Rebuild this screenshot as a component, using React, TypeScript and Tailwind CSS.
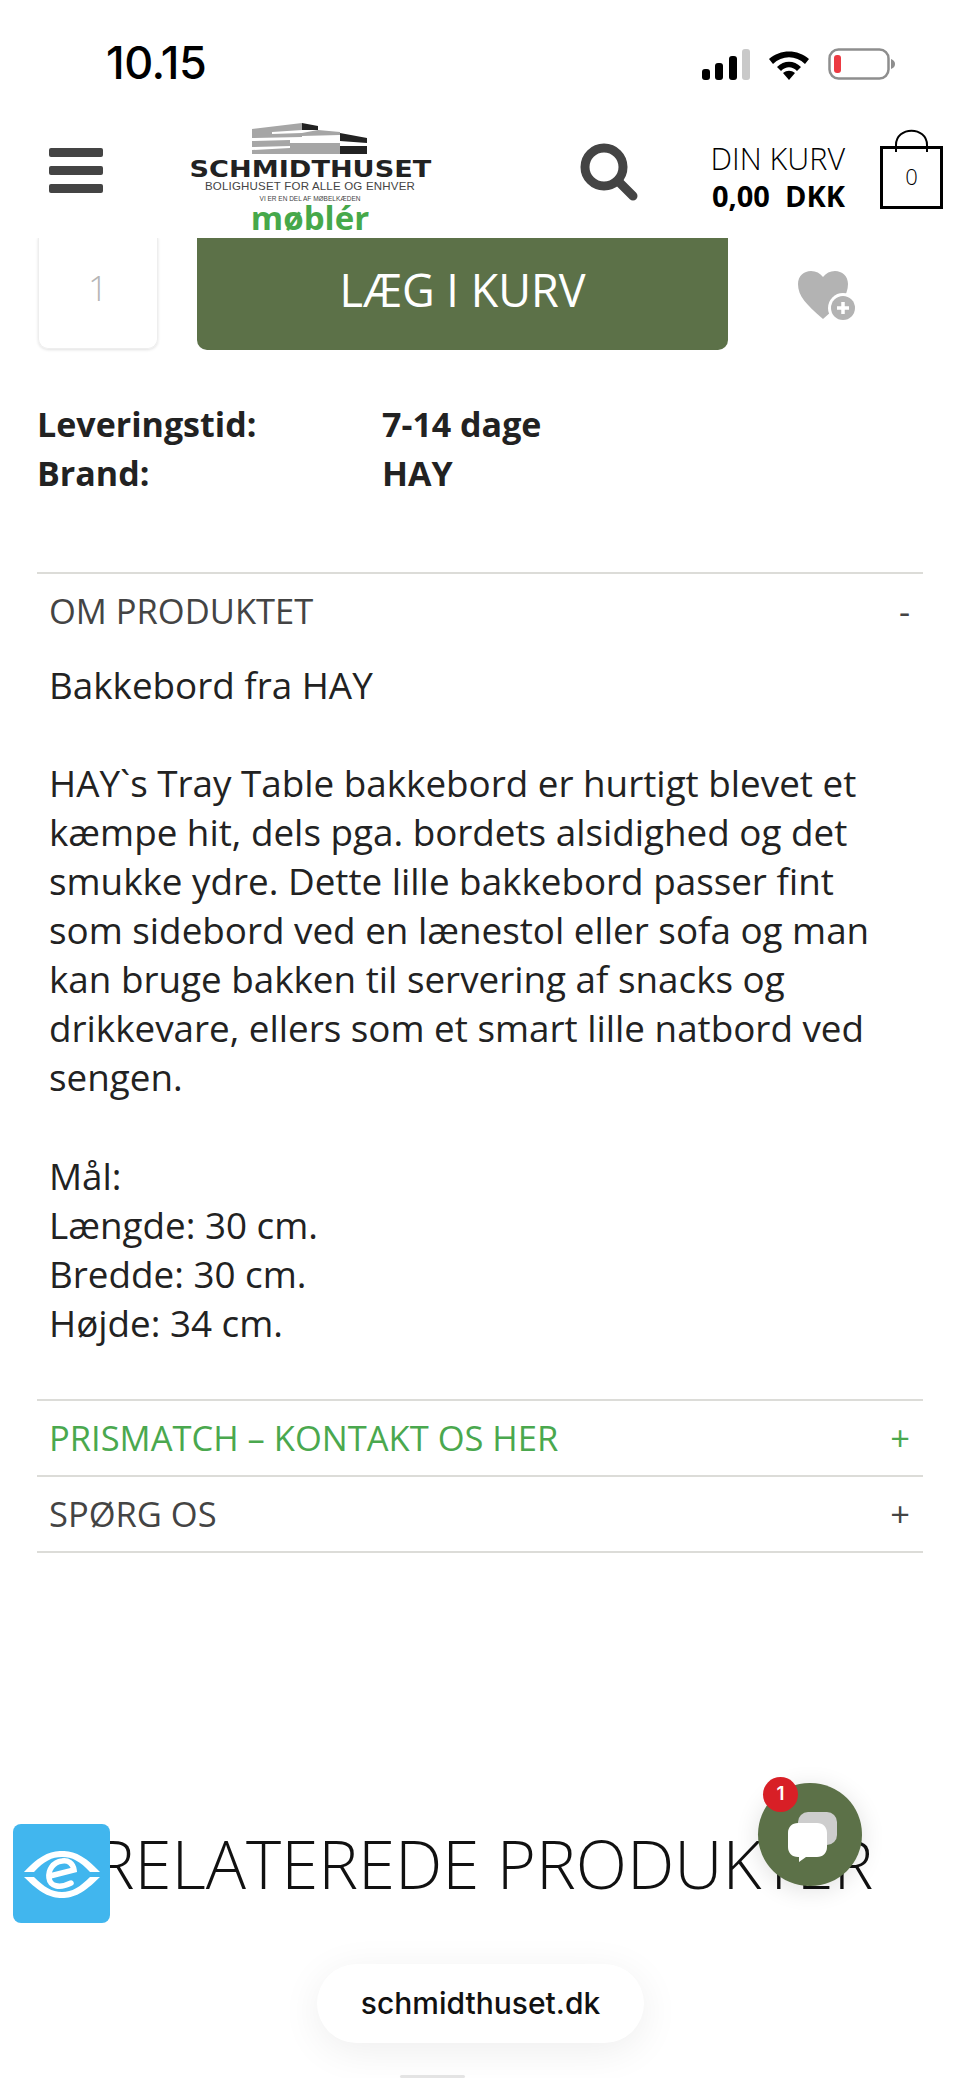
import React from 'react';

const sans = "font-['Open_Sans',sans-serif]";

const StatusBar = () => (
  <div className="h-[110px] flex items-start justify-between">
    <div className="ml-[106px] mt-[38px] font-['Inter',sans-serif] font-medium text-[45px] leading-[50px] tracking-[-0.5px] text-black">
      10.15
    </div>
    <div className="flex items-center gap-[18px] mr-[65px] mt-[48px]">
      <svg width="48" height="31" viewBox="0 0 48 31">
        <rect x="0" y="20" width="8" height="11" rx="3" fill="#000" />
        <rect x="13" y="14" width="8" height="17" rx="3" fill="#000" />
        <rect x="27" y="7" width="8" height="24" rx="3" fill="#000" />
        <rect x="40" y="0" width="8" height="31" rx="3" fill="#c9c9c9" />
      </svg>
      <svg width="42" height="31" viewBox="0 0 42 31">
        <path d="M1 10 C12 0 30 0 41 10 L37 15 C28 6 14 6 5 15 Z" fill="#000" />
        <path d="M9 18 C16 11 26 11 33 18 L29 22 C24 17 18 17 13 22 Z" fill="#000" />
        <path d="M15 24 C19 21 23 21 27 24 L21 31 Z" fill="#000" />
      </svg>
      <svg width="67" height="32" viewBox="0 0 67 32">
        <rect x="1.5" y="1.5" width="59" height="29" rx="9" fill="#fff" stroke="#8e8e8e" strokeWidth="2.5" />
        <rect x="6" y="7" width="7" height="18" rx="3" fill="#ec3a42" />
        <path d="M63 11 C66 12 67 14 67 16 C67 18 66 20 63 21 Z" fill="#8e8e8e" />
      </svg>
    </div>
  </div>
);

const Logo = () => (
  <div className="w-[242px] ml-[86px] mt-[13px] flex flex-col items-center">
    <svg width="116" height="31" viewBox="0 0 116 31">
      <path d="M0 6 L50 0 L50 7 L20 9 L20 11 L50 10 L50 14 L0 15 Z" fill="#a6a6a6" />
      <path d="M0 18 L38 17 L38 20 L88 20 L88 31 L0 31 L0 27 L38 25 L38 23 L0 24 Z" fill="#a6a6a6" />
      <path d="M50 0 L66 3 L66 7 L50 7 Z" fill="#222" />
      <path d="M88 10 L115 15 L115 20 L88 18 Z" fill="#222" />
      <path d="M66 7 L88 9 L88 12 L50 13 L50 10 Z" fill="#a6a6a6" />
      <path d="M88 23 L115 23 L115 31 L88 31 Z" fill="#222" />
    </svg>
    <div className="mt-[5px] font-['DejaVu_Sans',sans-serif] font-bold text-[23px] leading-[20px] scale-x-[1.18] text-[#222] whitespace-nowrap">
      SCHMIDTHUSET
    </div>
    <div className="mt-[1px] font-['Liberation_Sans',sans-serif] text-[11.5px] leading-[12px] tracking-[0.2px] text-[#444] whitespace-nowrap">
      BOLIGHUSET FOR ALLE OG ENHVER
    </div>
    <div className="mt-[3px] font-['Liberation_Sans',sans-serif] text-[6.5px] leading-[8px] text-[#444] whitespace-nowrap">
      VI ER EN DEL AF MØBELKÆDEN
    </div>
    <div className="mt-[1px] font-['Open_Sans',sans-serif] font-bold text-[33px] leading-[28px] text-[#46a84a] whitespace-nowrap">
      møblér
    </div>
  </div>
);

const Header = () => (
  <div className="relative z-10 h-[128px] bg-white flex items-start">
    <div className="ml-[49px] mt-[38px] w-[54px] flex flex-col gap-[9px]">
      <div className="h-[9px] rounded-[2px] bg-[#444]" />
      <div className="h-[9px] rounded-[2px] bg-[#444]" />
      <div className="h-[9px] rounded-[2px] bg-[#444]" />
    </div>
    <Logo />
    <svg className="ml-[149px] mt-[33px]" width="58" height="58" viewBox="0 0 58 58" fill="none">
      <circle cx="24" cy="24" r="19" stroke="#444" strokeWidth="9" />
      <line x1="38" y1="38" x2="53" y2="53" stroke="#444" strokeWidth="9" strokeLinecap="round" />
    </svg>
    <div className={`ml-auto mt-[29px] text-right text-black ${sans}`}>
      <div className="text-[30.5px] leading-[38px] whitespace-nowrap font-light">DIN KURV</div>
      <div className="text-[29px] leading-[38px] whitespace-nowrap font-bold">0,00&nbsp; DKK</div>
    </div>
    <div className="relative ml-[35px] mr-[17px] mt-[18px] w-[63px] h-[81px]">
      <svg width="63" height="81" viewBox="0 0 63 81" fill="none">
        <rect x="1.5" y="19.5" width="60" height="60" stroke="#000" strokeWidth="3" />
        <path d="M16 24 V17 C16 -2 47 -2 47 17 V24" stroke="#000" strokeWidth="2" />
      </svg>
      <span className={`absolute inset-x-0 top-[33px] text-center text-[22px] leading-[30px] font-light text-black ${sans}`}>0</span>
    </div>
  </div>
);

const BuyRow = () => (
  <div className="h-[112px] flex items-start pl-[38px]">
    <div className="w-[120px] h-[112px] -mt-[1px] pb-[8px] rounded-b-[10px] border border-t-0 border-[#eeeeee] shadow-[0_1px_3px_rgba(0,0,0,0.12)] flex items-center justify-center">
      <span className={`text-[35px] font-light text-[#b5b5b5] ${sans}`}>1</span>
    </div>
    <div className="ml-[39px] w-[531px] h-[112px] pb-[8px] bg-[#5c7148] rounded-b-[10px] flex items-center justify-center">
      <span className={`text-[45px] font-normal text-white ${sans}`}>LÆG I KURV</span>
    </div>
    <svg className="ml-[70px] mt-[33px]" width="60" height="52" viewBox="0 0 60 52">
      <path d="M25 48 C8 33 0 25 0 13 C0 5 6 0 13 0 C18 0 22 2 25 6 C28 2 32 0 37 0 C44 0 50 5 50 13 C50 25 42 33 25 48 Z" fill="#b3b3b3" />
      <circle cx="45" cy="37" r="15" fill="#fff" />
      <circle cx="45" cy="37" r="12" fill="#b3b3b3" />
      <path d="M45 31 V43 M39 37 H51" stroke="#fff" strokeWidth="3.5" />
    </svg>
  </div>
);

const Facts = () => (
  <div className={`pl-[37px] pt-[50px] text-[34px] leading-[49px] font-bold text-[#222] ${sans}`}>
    <div className="flex"><span className="w-[345px]">Leveringstid:</span><span>7-14 dage</span></div>
    <div className="flex"><span className="w-[345px]">Brand:</span><span>HAY</span></div>
  </div>
);

const AccordionRow = ({ label, sign, green }: { label: string; sign: string; green?: boolean }) => (
  <div className={`h-[76px] border-t-2 border-[#dcdcd8] flex items-center justify-between pl-[12px] pr-[13px] text-[34.5px] ${green ? 'text-[#4aa84e]' : 'text-[#444]'}`}>
    <span>{label}</span>
    <span>{sign}</span>
  </div>
);

const Description = () => (
  <div className={`mx-[37px] mt-[74px] ${sans}`}>
    <AccordionRow label="OM PRODUKTET" sign="-" />
    <div className="pl-[12px] text-[36.8px] leading-[49px] text-[#222] h-[751px]">
      <p className="pt-[13px]">Bakkebord fra HAY</p>
      <p className="mt-[49px]">
        HAY`s Tray Table bakkebord er hurtigt blevet et<br />
        kæmpe hit, dels pga. bordets alsidighed og det<br />
        smukke ydre. Dette lille bakkebord passer fint<br />
        som sidebord ved en lænestol eller sofa og man<br />
        kan bruge bakken til servering af snacks og<br />
        drikkevare, ellers som et smart lille natbord ved<br />
        sengen.
      </p>
      <p className="mt-[50px]">
        Mål:<br />
        Længde: 30 cm.<br />
        Bredde: 30 cm.<br />
        Højde: 34 cm.
      </p>
    </div>
    <AccordionRow label="PRISMATCH – KONTAKT OS HER" sign="+" green />
    <AccordionRow label="SPØRG OS" sign="+" />
    <div className="border-t-2 border-[#dcdcd8]" />
  </div>
);

const EyeBadge = () => (
  <div className="absolute left-[13px] top-[1824px] w-[97px] h-[99px] rounded-[8px] bg-[#41b6ee] flex items-center justify-center">
    <svg width="80" height="50" viewBox="0 0 80 50" fill="none">
      <path d="M2 23 C18 6 28 2 40 2 C52 2 62 6 78 23 L68 23 C58 12 50 8 40 8 C30 8 22 12 12 23 Z" fill="#fff" />
      <path d="M2 28 L12 28 C22 38 30 43 40 43 C50 43 58 38 68 28 L78 28 C62 44 52 49 40 49 C28 49 18 44 2 28 Z" fill="#fff" />
      <path d="M28 27 L52 21 C51 14 46 11 40 12 C31 13 26 21 27 29 C28 37 37 40 49 34" stroke="#fff" strokeWidth="5.5" strokeLinecap="round" />
    </svg>
  </div>
);

const ChatBubble = () => (
  <div className="absolute left-[758px] top-[1783px] w-[104px] h-[103px] rounded-full bg-[#5c7148] shadow-[0_4px_24px_rgba(0,0,0,0.12)]">
    <svg className="absolute left-[30px] top-[29px]" width="50" height="50" viewBox="0 0 50 50">
      <rect x="10" y="0" width="39" height="33" rx="10" fill="#cdcdcd" />
      <path d="M10 11 H29 C35 11 39 15 39 21 V35 C39 41 35 45 29 45 H18 L11 50 V45 H10 C4 45 0 41 0 35 V21 C0 15 4 11 10 11 Z" fill="#fff" />
    </svg>
    <div className="absolute left-[5px] -top-[6px] w-[35px] h-[35px] rounded-full bg-[#d81f26] flex items-center justify-center">
      <span className="font-['Inter',sans-serif] font-semibold text-[19px] text-white">1</span>
    </div>
  </div>
);

export default function App() {
  return (
    <div className="relative w-[960px] h-[2078px] overflow-hidden bg-white">
      <StatusBar />
      <Header />
      <BuyRow />
      <Facts />
      <Description />

      <h2 className={`mt-[270px] pl-[8px] text-center text-[67px] leading-[80px] font-light text-[#111] whitespace-nowrap ${sans}`}>
        RELATEREDE PRODUKTER
      </h2>

      <ChatBubble />
      <EyeBadge />

      {/* Browser address pill */}
      <div className="absolute left-[317px] top-[1964px] w-[327px] h-[79px] rounded-full bg-white shadow-[0_8px_40px_rgba(0,0,0,0.07)] flex items-center justify-center">
        <span className="font-['Inter',sans-serif] font-medium text-[30px] text-[#111]">schmidthuset.dk</span>
      </div>
      <div className="absolute left-[400px] top-[2075px] w-[65px] h-[3px] rounded-full bg-[#e4e4e4]" />
    </div>
  );
}
